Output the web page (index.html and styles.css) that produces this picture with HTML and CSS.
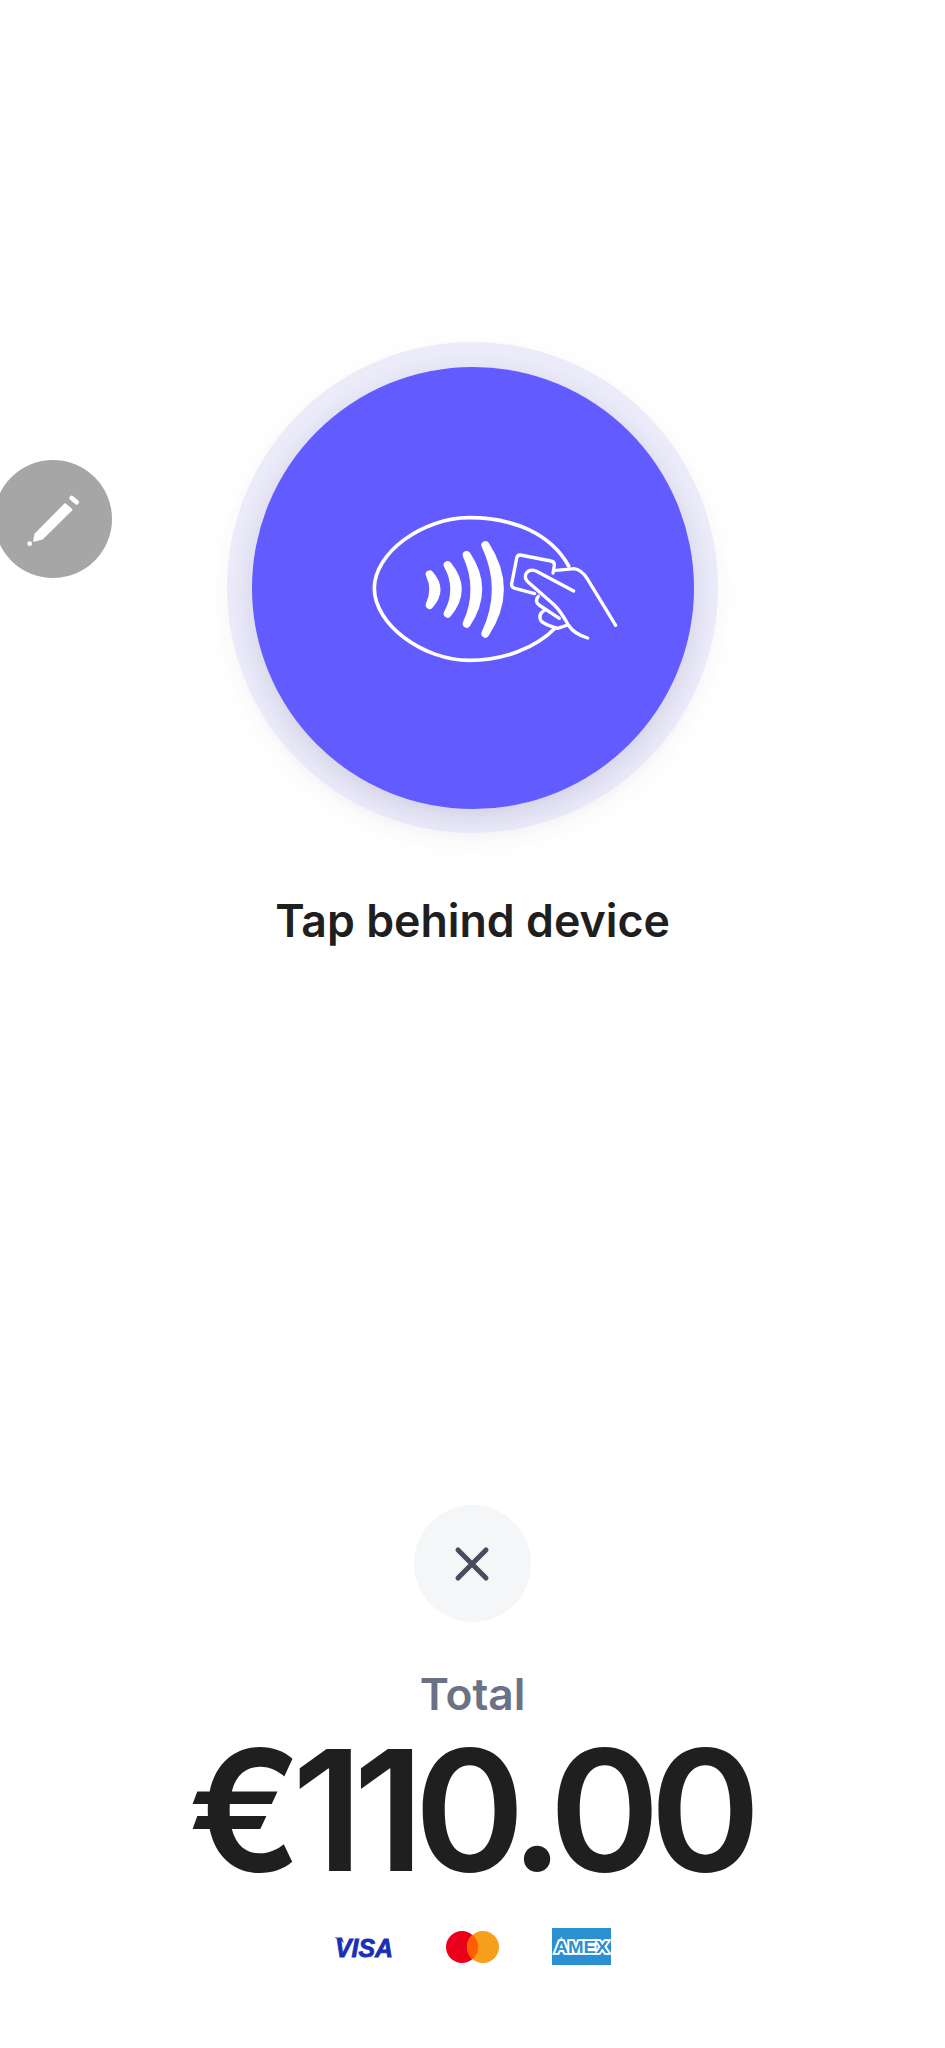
FILE: index.html
```html
<!DOCTYPE HTML>
<html lang="en">
  <head>
    <meta charset="utf-8">
    <title>Tap to pay</title>
    <link rel="stylesheet" href="styles.css">
  </head>
  <body>
    <button class="edit-fab" aria-label="Edit">
      <svg width="130" height="160" viewBox="0 0 390 480">
        <path fill="#fff" stroke="#fff" stroke-width="5" stroke-linejoin="round" d="M106 282 L195 192 L215 209 L127 296 L102 303 Z"/>
        <path fill="none" stroke="#fff" stroke-width="14" stroke-linecap="round" d="M215 174 L230 187"/>
        <circle fill="#fff" cx="89" cy="311" r="7"/>
      </svg>
    </button>

    <main class="screen">
      <section class="reader">
        <div class="halo">
          <div class="disc">
            <svg class="contactless" width="300" height="220" viewBox="0 0 900 660" fill="none" stroke="#fff" stroke-linecap="round" stroke-linejoin="round">
              <!-- reader outline, open where the hand crosses it -->
              <path stroke-width="11" d="M683 255 C630 160 520 110 385 110 C245 110 100 215 100 322 C100 430 245 538 385 538 C490 538 585 500 642 442"/>
              <!-- contactless waves, tapered towards the tips -->
              <g fill="#fff" stroke-width="24">
                <path d="M266 280 Q306 325 266 372 Q288 325 266 280 Z"/>
                <path d="M320 252 Q380 325 320 398 Q360 325 320 252 Z"/>
                <path d="M377 222 Q446 325 377 428 Q424 325 377 222 Z"/>
                <path d="M433 192 Q520 325 433 458 Q496 325 433 192 Z"/>
              </g>
              <!-- card -->
              <path stroke-width="10" d="M636 276 L640 254 Q642 242 630 240 L538 222 Q529 221 527 232 L512 308 Q510 319 522 322 L581 338"/>
              <!-- hand -->
              <g stroke-width="10">
                <path d="M698 330 L585 270 Q565 262 555 278 Q549 292 562 304 L640 372 Q660 392 682 432 Q700 460 740 471"/>
                <path d="M645 268 L700 263 Q722 266 740 295 L824 433"/>
                <path d="M592 346 Q580 360 594 372 L655 412"/>
                <path d="M610 388 Q590 400 600 420 Q612 432 650 442 L680 432"/>
              </g>
            </svg>
          </div>
        </div>
        <h1 class="prompt">Tap behind device</h1>
      </section>

      <section class="summary">
        <button class="close" aria-label="Cancel">
          <svg width="36" height="36" viewBox="0 0 36 36" fill="none" stroke="#474b5c" stroke-width="5" stroke-linecap="round">
            <path d="M4 4 L32 32 M32 4 L4 32"/>
          </svg>
        </button>
        <div class="total-label">Total</div>
        <div class="total-amount">€110.00</div>
        <div class="schemes">
          <svg class="visa" width="59" height="24" viewBox="0 0 59 24">
            <path fill="#1a2fb5" d="M0 2.5 H8 L10 8 Q6 4 0 2.5 Z"/>
            <text x="1" y="21.5" font-family="Liberation Sans" font-weight="700" font-style="italic" font-size="26" fill="#1a2fb5" stroke="#1a2fb5" stroke-width=".8" textLength="58" lengthAdjust="spacingAndGlyphs">VISA</text>
          </svg>
          <svg width="53" height="32" viewBox="0 0 53 32">
            <circle cx="16" cy="16" r="16" fill="#eb001b"/>
            <circle cx="37" cy="16" r="16" fill="#f79e1b"/>
            <path fill="#ff5f00" d="M26.5 3.7 A16 16 0 0 1 26.5 28.3 A16 16 0 0 1 26.5 3.7 Z"/>
          </svg>
          <svg width="59" height="37" viewBox="0 0 59 37">
            <rect width="59" height="37" fill="#2a90d2"/>
            <text class="amex-word" x="29.5" y="24.5" text-anchor="middle" font-family="Liberation Sans" font-weight="700" font-size="16" textLength="54" lengthAdjust="spacingAndGlyphs">AMEX</text>
          </svg>
        </div>
      </section>
    </main>
  </body>
</html>
```

FILE: styles.css
```css
html, body { margin: 0; padding: 0; background: #fff; }
body { font-family: Inter, "Liberation Sans", sans-serif; color: #1f1f1f; }

.screen {
  position: relative;
  box-sizing: border-box;
  height: 2048px;
  display: flex;
  flex-direction: column;
  align-items: center;
  justify-content: space-between;
  padding: 342px 0 83px;
  overflow: hidden;
}

.reader { display: flex; flex-direction: column; align-items: center; }

.halo {
  width: 491px;
  height: 491px;
  border-radius: 50%;
  display: flex;
  align-items: center;
  justify-content: center;
  background: #ebebfa;
  box-shadow: 0 8px 24px rgba(60, 60, 110, .05);
}
.disc {
  width: 442px;
  height: 442px;
  border-radius: 50%;
  background: #625bff;
  display: flex;
  align-items: center;
  justify-content: center;
  box-shadow: 0 8px 26px rgba(50, 50, 90, .14);
}
.contactless { margin: 6px 0 0 37px; }

.prompt {
  margin: 59px 0 0;
  font-size: 44.7px;
  line-height: 58px;
  font-weight: 600;
  color: #1f1f1f;
}

.edit-fab {
  position: fixed;
  left: -6px;
  top: 460px;
  width: 118px;
  height: 118px;
  padding: 0;
  border: 0;
  border-radius: 50%;
  background: #a6a6a6;
  overflow: visible;
  z-index: 2;
}
.edit-fab svg { position: absolute; left: 6px; top: -20px; }

.summary { display: flex; flex-direction: column; align-items: center; }

.close {
  width: 117px;
  height: 117px;
  padding: 0;
  border: 0;
  border-radius: 50%;
  background: #f5f6f8;
  display: flex;
  align-items: center;
  justify-content: center;
}

.total-label {
  margin-top: 47px;
  font-size: 44.3px;
  line-height: 50px;
  font-weight: 600;
  color: #6b7285;
}
.total-amount {
  margin-top: 9px;
  padding-right: 6px;
  font-size: 168px;
  line-height: 165px;
  font-weight: 560;
  letter-spacing: -10px;
  color: #1f1f1f;
}
.schemes {
  margin-top: 35px;
  display: flex;
  align-items: center;
  gap: 53px;
}
.visa { overflow: visible; }
.amex-word {
  fill: #2a90d2;
  stroke: #fff;
  stroke-width: 3.5px;
  paint-order: stroke;
}
```
